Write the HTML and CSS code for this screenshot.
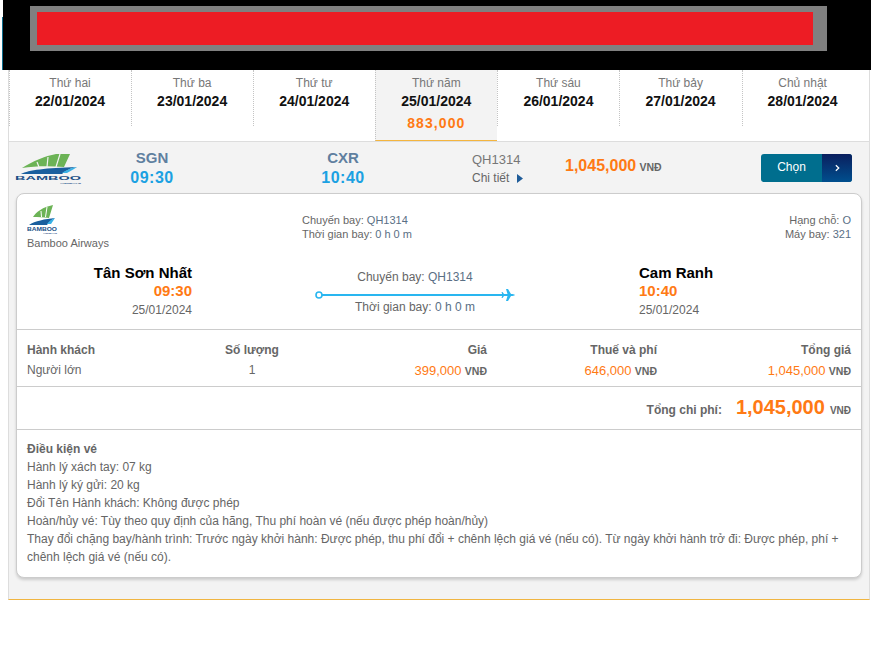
FILE: index.html
```html
<!DOCTYPE html>
<html lang="vi">
<head>
<meta charset="utf-8">
<title>Chọn chuyến bay</title>
<link rel="stylesheet" href="styles.css">
</head>
<body>
<header class="banner">
  <div class="banner-grey"><div class="banner-red"></div></div>
</header>
<main class="panel">
  <nav class="days">
    <div class="day"><div class="day-name">Thứ hai</div><div class="day-date">22/01/2024</div></div>
    <div class="day"><div class="day-name">Thứ ba</div><div class="day-date">23/01/2024</div></div>
    <div class="day"><div class="day-name">Thứ tư</div><div class="day-date">24/01/2024</div></div>
    <div class="day active"><div class="day-name">Thứ năm</div><div class="day-date">25/01/2024</div><div class="day-price">883,000</div></div>
    <div class="day"><div class="day-name">Thứ sáu</div><div class="day-date">26/01/2024</div></div>
    <div class="day"><div class="day-name">Thứ bảy</div><div class="day-date">27/01/2024</div></div>
    <div class="day"><div class="day-name">Chủ nhật</div><div class="day-date">28/01/2024</div></div>
  </nav>

  <section class="flight">
    <div class="flight-logo">
      <svg class="logo-big" viewBox="0 0 68 30" width="68" height="30">
        <path d="M7 14 C18 7 30 2 41 0 L55 0 L49 13 C35 12 20 12 7 14Z" fill="#6cb356"/>
        <path d="M22 8 L24 13 M33 3 L32 13 M45 0 L41 13" stroke="#f3f3f3" stroke-width="1.200"/>
        <path d="M6 20 C14 16 30 14 62 13 C56 14 50 17 47 20Z" fill="#1a5f9e"/>
        <path d="M47 19 C50 17 55 14 62 13 L59 15 L52 19Z" fill="#39b1e6"/>
        <text x="0" y="25.500" class="logo-word" textLength="66" lengthAdjust="spacingAndGlyphs">BAMBOO</text>
        <text x="45" y="29.500" class="logo-sub" textLength="21" lengthAdjust="spacingAndGlyphs">AIRWAYS</text>
      </svg>
    </div>
    <div class="stop"><div class="stop-code">SGN</div><div class="stop-time">09:30</div></div>
    <div class="stop stop-to"><div class="stop-code">CXR</div><div class="stop-time">10:40</div></div>
    <div class="flight-no">
      <div class="flight-code">QH1314</div>
      <div class="flight-more">Chi tiết <svg class="caret" viewBox="0 0 6 9" width="6" height="9"><path d="M0 0 L6 4.500 L0 9Z" fill="#1f5c99"/></svg></div>
    </div>
    <div class="flight-price"><span class="price-big">1,045,000</span> <span class="vnd">VNĐ</span></div>
    <button class="choose" type="button"><span class="choose-text">Chọn</span><span class="choose-arrow"><svg viewBox="0 0 6 8" width="5" height="8"><path d="M1 .8 L4.500 4 L1 7.200" fill="none" stroke="#fff" stroke-width="1.500"/></svg></span></button>
  </section>

  <section class="card">
    <div class="card-head">
      <div class="airline">
        <svg class="logo-small" viewBox="0 0 31 30" width="31" height="30">
          <path d="M6 13 C9 8 16 3 26 1 L22 14 C17 13 11 13 6 13Z" fill="#6cb356"/>
          <path d="M14 7 L14.500 13 M20 3 L18.500 13" stroke="#fff" stroke-width="1"/>
          <path d="M2 21 C8 17 18 15 28 14 C24 16 22 18 20 21Z" fill="#1a5f9e"/>
          <path d="M20 20 C22 17 25 15 28 14 L24 20Z" fill="#39b1e6"/>
          <text x="0" y="27" class="logo-word-small" textLength="30" lengthAdjust="spacingAndGlyphs">BAMBOO</text>
          <text x="16" y="30" class="logo-sub" textLength="14" lengthAdjust="spacingAndGlyphs">AIRWAYS</text>
        </svg>
        <div class="airline-name">Bamboo Airways</div>
      </div>
      <div class="head-mid">
        <div>Chuyến bay: <span class="accent">QH1314</span></div>
        <div>Thời gian bay: <span class="accent">0 h 0 m</span></div>
      </div>
      <div class="head-right">
        <div>Hạng chỗ: <span class="accent">O</span></div>
        <div>Máy bay: <span class="accent">321</span></div>
      </div>
    </div>

    <div class="route">
      <div class="place place-from">
        <div class="place-name">Tân Sơn Nhất</div>
        <div class="place-time">09:30</div>
        <div class="place-date">25/01/2024</div>
      </div>
      <div class="path">
        <div class="path-text">Chuyến bay: <span class="accent">QH1314</span></div>
        <svg class="path-line" viewBox="0 0 200 12" width="200" height="12">
          <circle cx="4" cy="6" r="3" fill="#fff" stroke="#29b6f0" stroke-width="1.600"/>
          <path d="M7 6 H190" stroke="#29b6f0" stroke-width="2"/>
          <path d="M200 6 C199 5.300 198 5 196 5 L193 0 H191 L192.500 5 H189 L187.500 3 H186.500 L187.500 6 L186.500 9 H187.500 L189 7 H192.500 L191 12 H193 L196 7 C198 7 199 6.700 200 6Z" fill="#29b6f0"/>
        </svg>
        <div class="path-text path-time">Thời gian bay: <span class="accent">0 h 0 m</span></div>
      </div>
      <div class="place place-to">
        <div class="place-name">Cam Ranh</div>
        <div class="place-time">10:40</div>
        <div class="place-date">25/01/2024</div>
      </div>
    </div>

    <div class="fares">
      <div class="fare-h">Hành khách</div>
      <div class="fare-h center">Số lượng</div>
      <div class="fare-h right">Giá</div>
      <div class="fare-h right">Thuế và phí</div>
      <div class="fare-h right">Tổng giá</div>
      <div>Người lớn</div>
      <div class="center">1</div>
      <div class="right"><span class="orange">399,000</span> <span class="vnd">VNĐ</span></div>
      <div class="right"><span class="orange">646,000</span> <span class="vnd">VNĐ</span></div>
      <div class="right"><span class="orange">1,045,000</span> <span class="vnd">VNĐ</span></div>
    </div>

    <div class="total">
      <span class="total-label">Tổng chi phí:</span>
      <span class="total-value">1,045,000</span>
      <span class="vnd total-vnd">VNĐ</span>
    </div>

    <div class="terms">
      <div class="terms-title">Điều kiện vé</div>
      <div>Hành lý xách tay: 07 kg</div>
      <div>Hành lý ký gửi: 20 kg</div>
      <div>Đổi Tên Hành khách: Không được phép</div>
      <div>Hoàn/hủy vé: Tùy theo quy định của hãng, Thu phí hoàn vé (nếu được phép hoàn/hủy)</div>
      <div>Thay đổi chặng bay/hành trình: Trước ngày khởi hành: Được phép, thu phí đổi + chênh lệch giá vé (nếu có). Từ ngày khởi hành trở đi: Được phép, phí + chênh lệch giá vé (nếu có).</div>
    </div>
  </section>
</main>
</body>
</html>
```

FILE: styles.css
```css
* { box-sizing: border-box; }
html, body { margin: 0; padding: 0; background: #fff; }
body {
  font-family: "Liberation Sans", Arial, sans-serif;
  font-size: 12px;
  color: #666;
  height: 664px;
  overflow: hidden;
}

/* Banner */
.banner {
  position: relative;
  width: 868px;
  height: 70px;
  margin-left: 3px;
  padding: 6px 44px 19px 27px;
  background: #000;
}
.banner::before {
  content: "";
  position: absolute;
  left: -1px;
  top: 17px;
  bottom: 0;
  width: 1px;
  background: #0e6e8e;
}
.banner-grey {
  height: 45px;
  padding: 6px 14px 6px 7px;
  background: #808080;
}
.banner-red { height: 33px; background: #ed1c24; }

/* Panel */
.panel {
  width: 862px;
  height: 530px;
  margin-left: 8px;
  border-left: 1px solid #ddd;
  border-right: 1px solid #ddd;
  border-bottom: 1px solid #f0b541;
  background: #f3f3f3;
}

/* Day tabs */
.days {
  display: grid;
  grid-template-columns: repeat(7, 122.100px);
  align-items: start;
  height: 72px;
  background: #fff;
  border-bottom: 1px solid #ddd;
}
.day {
  height: 56px;
  padding: 6px 1px 0 0;
  text-align: center;
  border-left: 1px dotted #c4c4c4;
}
.day.active {
  height: 71px;
  background: #f3f3f3;
  border-bottom: 1px solid #f4b53f;
}
.day-name { font-size: 12px; line-height: 14px; color: #777; }
.day-date { margin-top: 3px; font-size: 14px; line-height: 16px; font-weight: 700; color: #111; }
.day-price { margin-top: 6px; font-size: 14px; line-height: 16px; font-weight: 700; color: #ff7a14; letter-spacing: 1.100px; }

/* Flight row */
.flight {
  display: grid;
  grid-template-columns: 104px 78px 113px 78px 90px 93px 196px auto;
  height: 51px;
  align-items: start;
}
.flight-logo { padding: 12px 0 0 6px; }
.logo-big, .logo-small { display: block; }
.logo-word { font: 700 6px "Liberation Sans", Arial, sans-serif; fill: #1a4f86; }
.logo-word-small { font: 700 6px "Liberation Sans", Arial, sans-serif; fill: #1a4f86; }
.logo-sub { font: 700 2.500px "Liberation Sans", Arial, sans-serif; fill: #1a4f86; }
.stop { grid-column: 2; padding-top: 8px; text-align: center; }
.stop-to { grid-column: 4; }
.stop-code { font-size: 15px; line-height: 16px; font-weight: 700; color: #5f7f9f; }
.stop-time { margin-top: 2px; font-size: 16px; line-height: 19px; font-weight: 700; color: #1ba1e2; letter-spacing: .5px; }
.flight-no { grid-column: 6; padding-top: 9px; color: #777; }
.flight-code { font-size: 13px; line-height: 18px; }
.flight-more { font-size: 12px; line-height: 18px; color: #666; }
.caret { margin-left: 4px; vertical-align: -1px; }
.flight-price { padding-top: 15px; white-space: nowrap; }
.price-big { font-size: 16px; font-weight: 700; color: #ff7a14; }
.vnd { font-size: 10.500px; font-weight: 700; color: #666; }
.choose {
  display: flex;
  width: 91px;
  height: 28px;
  margin-top: 12px;
  padding: 0;
  border: 0;
  border-radius: 3px;
  overflow: hidden;
  font: 12px "Liberation Sans", Arial, sans-serif;
  color: #fff;
  background: #006e8e;
}
.choose-text { width: 61px; line-height: 27px; text-align: center; }
.choose-arrow {
  display: flex;
  flex: 1;
  align-items: center;
  justify-content: center;
  background: linear-gradient(#0a1f5e, #004f8e);
}

/* Card */
.card {
  width: 846px;
  height: 385px;
  margin-left: 7px;
  border: 1px solid #ccc;
  border-radius: 8px;
  background: #fff;
  box-shadow: 0 2px 3px rgba(0, 0, 0, .16);
}
.card-head {
  display: grid;
  grid-template-columns: 275px 1fr auto;
  height: 64px;
  padding: 10px 10px 0;
  font-size: 11px;
  line-height: 14px;
}
.airline-name { margin-top: 2px; }
.head-mid { padding-top: 9px; }
.head-right { padding-top: 9px; text-align: right; }
.accent { color: #5a6f85; }

.route {
  display: grid;
  grid-template-columns: 175px 323px 1fr;
  height: 71px;
}
.place { padding-top: 6px; }
.place-from { text-align: right; }
.place-to { padding-left: 124px; }
.place-name { font-size: 15px; line-height: 18px; font-weight: 700; color: #000; }
.place-time { font-size: 15px; line-height: 18px; font-weight: 700; color: #ff7a14; }
.place-date { margin-top: 1px; font-size: 12px; line-height: 18px; }
.path { margin-left: 123px; width: 200px; padding-top: 12px; text-align: center; }
.path-text { line-height: 14px; }
.path-line { display: block; margin-top: 5px; }
.path-time { margin-top: -1px; }

.fares {
  display: grid;
  grid-template-columns: 180px 90px 1fr 170px 194px;
  grid-auto-rows: 20px;
  align-items: center;
  height: 58px;
  padding: 10px 10px 0;
  border-top: 1px solid #ccc;
  border-bottom: 1px solid #ccc;
}
.fare-h { font-weight: 700; }
.center { text-align: center; }
.right { text-align: right; }
.orange { font-size: 13px; color: #ff7a14; }

.total {
  display: flex;
  justify-content: flex-end;
  align-items: baseline;
  height: 43px;
  padding: 9px 10px 0;
  border-bottom: 1px solid #ccc;
}
.total-label { font-weight: 700; margin-right: 14px; }
.total-value { font-size: 20px; font-weight: 700; color: #ff7a14; margin-right: 5px; }
.total-vnd { font-size: 10px; }

.terms { padding: 10px 10px 0; line-height: 18px; }
.terms-title { font-weight: 700; }
```
